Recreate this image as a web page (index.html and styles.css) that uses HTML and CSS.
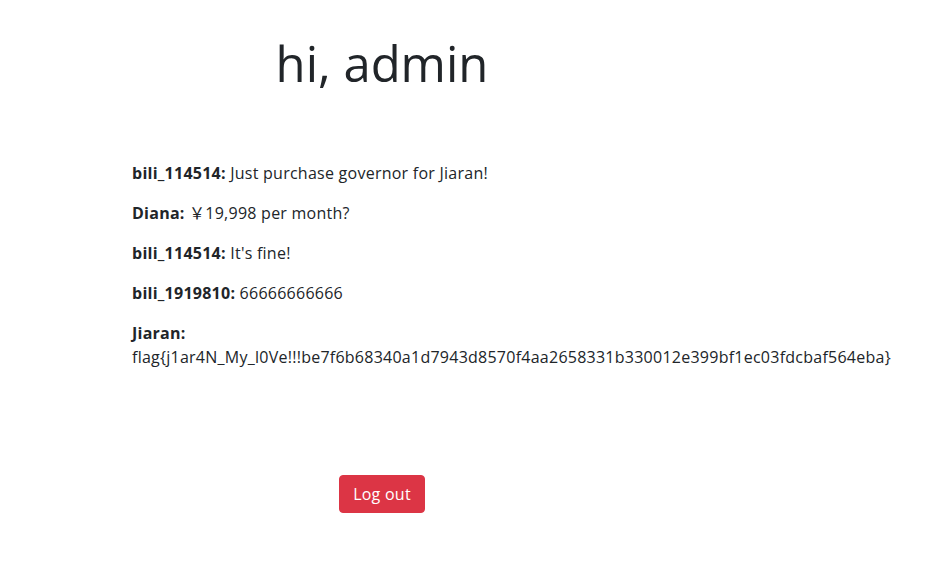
FILE: index.html
```html
<!DOCTYPE html>
<html lang="en">
<head>
<meta charset="utf-8">
<title>hi, admin</title>
<link rel="stylesheet" href="styles.css">
</head>
<body>
<main class="page">
  <h1 class="title">hi, admin</h1>
  <section class="chat">
    <p class="msg"><strong>bili_114514:</strong> Just purchase governor for Jiaran!</p>
    <p class="msg"><strong>Diana:</strong> ￥19,998 per month?</p>
    <p class="msg"><strong>bili_114514:</strong> It's fine!</p>
    <p class="msg"><strong>bili_1919810:</strong> 66666666666</p>
    <p class="msg"><strong>Jiaran:</strong> flag{j1ar4N_My_l0Ve!!!be7f6b68340a1d7943d8570f4aa2658331b330012e399bf1ec03fdcbaf564eba}</p>
  </section>
  <div class="actions">
    <button class="btn-logout" type="button">Log out</button>
  </div>
</main>
</body>
</html>
```
FILE: styles.css
```css
html, body {
  margin: 0;
  padding: 0;
  background: #fff;
}
body {
  font-family: "Open Sans", "Noto Sans", "Noto Sans CJK SC", sans-serif;
  font-size: 16px;
  line-height: 1.5;
  color: #212529;
  letter-spacing: 0.25px;
}
.page {
  width: 500px;
  margin-left: 132px;
  padding-top: 34px;
}
.title {
  margin: 0 0 68px;
  text-align: center;
  font-size: 49px;
  font-weight: 400;
  line-height: 1.2;
  letter-spacing: 0;
}
.msg {
  margin: 0 0 16px;
}
.msg strong {
  font-weight: 700;
}
.actions {
  display: flex;
  justify-content: center;
  padding-top: 90px;
}
.btn-logout {
  font-family: inherit;
  font-size: 16px;
  line-height: 1.5;
  letter-spacing: 0.25px;
  padding: 6px 13px;
  height: 38px;
  color: #fff;
  background: #dc3545;
  border: 1px solid #dc3545;
  border-radius: 4px;
}
```
